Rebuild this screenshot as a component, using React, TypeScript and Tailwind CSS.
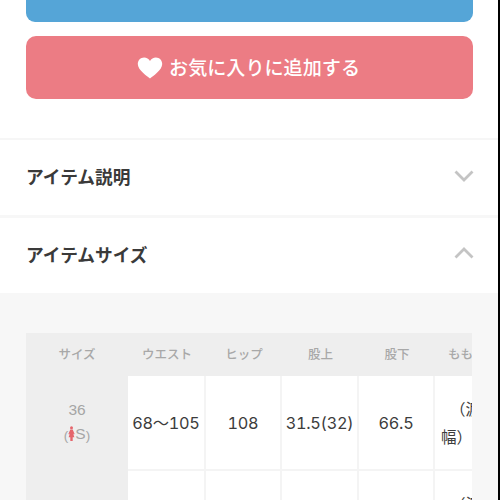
import { ReactNode } from 'react'

const columns = ['ウエスト', 'ヒップ', '股上', '股下']

const rows = [
  { size: '36', mark: 'S', values: ['68〜105', '108', '31.5(32)', '66.5'] },
  { size: '38', mark: 'M', values: ['', '', '', ''] },
]

function Heart() {
  return (
    <svg width="26" height="22" viewBox="0 0 26 22" className="shrink-0 fill-white">
      <path d="M13 21.4C10.6 19.6.8 13.400.8 7.100.8 3.300 3.600.5 7.100.5c2.500 0 4.700 1.400 5.900 3.600C14.200 1.900 16.400.5 18.900.5c3.500 0 6.300 2.800 6.300 6.600 0 6.300-9.800 12.500-12.200 14.300Z" />
    </svg>
  )
}

function Chevron({ open }: { open?: boolean }) {
  return (
    <svg width="20" height="12" viewBox="0 0 20 12" className={`fill-none stroke-[#c4c4c4] stroke-[2.8] ${open ? 'mb-[5px]' : 'mb-[3px]'}`}>
      <path d={open ? 'M1.500 10.500 10 2l8.500 8.500' : 'M1.500 1.500 10 10l8.500-8.500'} />
    </svg>
  )
}

function Woman() {
  return (
    <svg width="7" height="15" viewBox="0 0 7 15" className="mb-[2px] fill-[#e5656c]">
      <circle cx="3.500" cy="1.700" r="1.500" />
      <path d="M2.300 3.600h2.400L6.600 8l-.8.400-.9-1.500 1.500 4.300H4.700V15H2.300v-3.800H.6l1.500-4.300-.9 1.500L.4 8Z" />
    </svg>
  )
}

function AccordionTitle({ children, open }: { children: ReactNode; open?: boolean }) {
  return (
    <button className="flex h-[75px] w-full items-center justify-between pr-[24px] pl-[26px] text-[17.700px] font-bold text-[#3a3a3a]">
      <span className="pt-[2px]">{children}</span>
      <Chevron open={open} />
    </button>
  )
}

export default function App() {
  return (
    <div className="h-[500px] w-[500px] overflow-hidden border-r-2 border-black bg-white font-['Liberation_Sans','Noto_Sans_CJK_JP',sans-serif]">
      <div className="pr-[25px] pl-[26px]">
        <div className="h-[22px] rounded-b-[9px] bg-[#55a5d7]" />
        <button className="mt-[14px] flex h-[63px] w-full items-center justify-center gap-[6px] rounded-[10px] bg-[#ec7c84] pr-[2px] text-[19.100px] font-medium text-white">
          <Heart />
          <span className="pt-[3px]">お気に入りに追加する</span>
        </button>
      </div>
      <div className="mt-[39px] border-t-2 border-[#f6f6f6]">
        <AccordionTitle>アイテム説明</AccordionTitle>
      </div>
      <div className="border-t-[3px] border-[#f7f7f7]">
        <AccordionTitle open>アイテムサイズ</AccordionTitle>
      </div>
      <div className="h-[208px] bg-[#f7f7f7] px-[26px] pt-[40px]">
        <div className="overflow-hidden">
          <div className="w-[540px]">
            <div className="grid h-[43px] grid-cols-[102px_78px_76px_77px_76px_131px] items-center bg-[#eee] pt-[2px] text-center text-[12.500px] font-medium text-[#a8a8a8]">
              <div>サイズ</div>
              {columns.map((name) => (
                <div key={name}>{name}</div>
              ))}
              <div className="pl-[13px] text-left">もも周り</div>
            </div>
            {rows.map((row) => (
              <div key={row.size} className="grid h-[95px] grid-cols-[102px_78px_76px_77px_76px_131px]">
                <div className="flex flex-col items-center bg-[#eee] pt-[21px] text-[15.500px] leading-[25px] text-[#a5a5a5]">
                  <div>{row.size}</div>
                  <div className="flex items-center leading-[22px]">
                    <span className="pt-[3px] text-[13.500px]">(</span>
                    <Woman />
                    <span className="pb-[2px]">{row.mark}</span>
                    <span className="pt-[3px] text-[13.500px]">)</span>
                  </div>
                </div>
                {row.values.map((value, i) => (
                  <div
                    key={i}
                    className="flex items-center justify-center border-r-2 border-b-2 border-[#f4f4f4] bg-white pt-[2px] font-['Inter','Noto_Sans_CJK_JP',sans-serif] text-[16.300px] tracking-[-0.3px] whitespace-nowrap text-[#3c3c3c] tabular-nums"
                  >
                    {value}
                  </div>
                ))}
                <div className="border-b-2 border-[#f4f4f4] bg-white pt-[18px] pl-[6px] font-['Noto_Sans_CJK_JP',sans-serif] text-[15.500px] leading-[28px] text-[#3c3c3c]">
                  <div className="pl-[9px]">（渡り</div>
                  <div>幅）</div>
                </div>
              </div>
            ))}
          </div>
        </div>
      </div>
    </div>
  )
}
